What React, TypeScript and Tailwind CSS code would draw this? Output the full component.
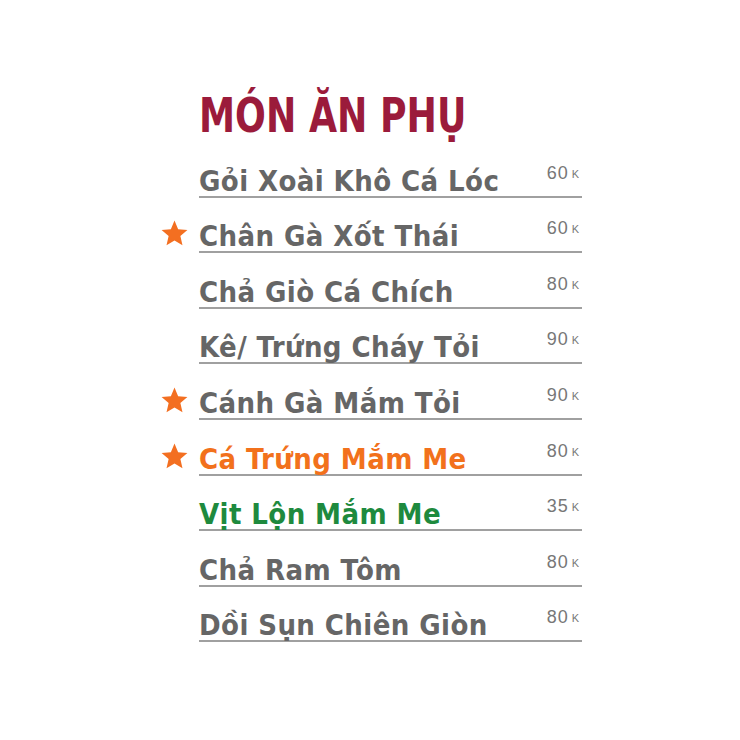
const items = [
  { name: "Gỏi Xoài Khô Cá Lóc", price: "60", star: false, color: "text-[#666666]" },
  { name: "Chân Gà Xốt Thái", price: "60", star: true, color: "text-[#666666]" },
  { name: "Chả Giò Cá Chích", price: "80", star: false, color: "text-[#666666]" },
  { name: "Kê/ Trứng Cháy Tỏi", price: "90", star: false, color: "text-[#666666]" },
  { name: "Cánh Gà Mắm Tỏi", price: "90", star: true, color: "text-[#666666]" },
  { name: "Cá Trứng Mắm Me", price: "80", star: true, color: "text-[#f2711c]" },
  { name: "Vịt Lộn Mắm Me", price: "35", star: false, color: "text-[#1e8a3e]" },
  { name: "Chả Ram Tôm", price: "80", star: false, color: "text-[#666666]" },
  { name: "Dồi Sụn Chiên Giòn", price: "80", star: false, color: "text-[#666666]" },
];

function Star() {
  return (
    <svg width="29" height="27" viewBox="0 0 24 23" className="block">
      <path
        d="M12 0.5l3.1 7.3 7.9.7-6 5.2 1.8 7.8L12 17.4l-6.8 4.1 1.8-7.8-6-5.2 7.9-.7z"
        fill="#f36f21"
      />
    </svg>
  );
}

export default function App() {
  return (
    <div className="w-[740px] h-[740px] bg-white pt-[91px] pl-[160px]">
      <div className="w-[422px]">
        <h1 className="pl-[39px] font-['DejaVu_Sans_Condensed',sans-serif] font-bold text-[48px] leading-none text-[#9b1b3b]">
          <span className="inline-block origin-left scale-x-[0.84]">MÓN ĂN PHỤ</span>
        </h1>
        <div className="mt-[3px]">
          {items.map((it) => (
            <div key={it.name} className="flex h-[55.6px]">
              <div className="w-[39px] flex items-end pb-[6px]">
                {it.star && <Star />}
              </div>
              <div className="flex-1 flex items-end justify-between border-b-2 border-[#a0a0a0]">
                <span
                  className={`font-['DejaVu_Sans_Condensed',sans-serif] font-bold text-[29px] leading-none tracking-[0.4px] ${it.color}`}
                >
                  {it.name}
                </span>
                <span className="mb-[14px] mr-[2px] font-['Liberation_Sans',sans-serif] text-[18px] leading-none text-[#777777] tracking-[1px]">
                  {it.price}
                  <sup className="ml-[3px] text-[11px] relative -top-[1px]">K</sup>
                </span>
              </div>
            </div>
          ))}
        </div>
      </div>
    </div>
  );
}
